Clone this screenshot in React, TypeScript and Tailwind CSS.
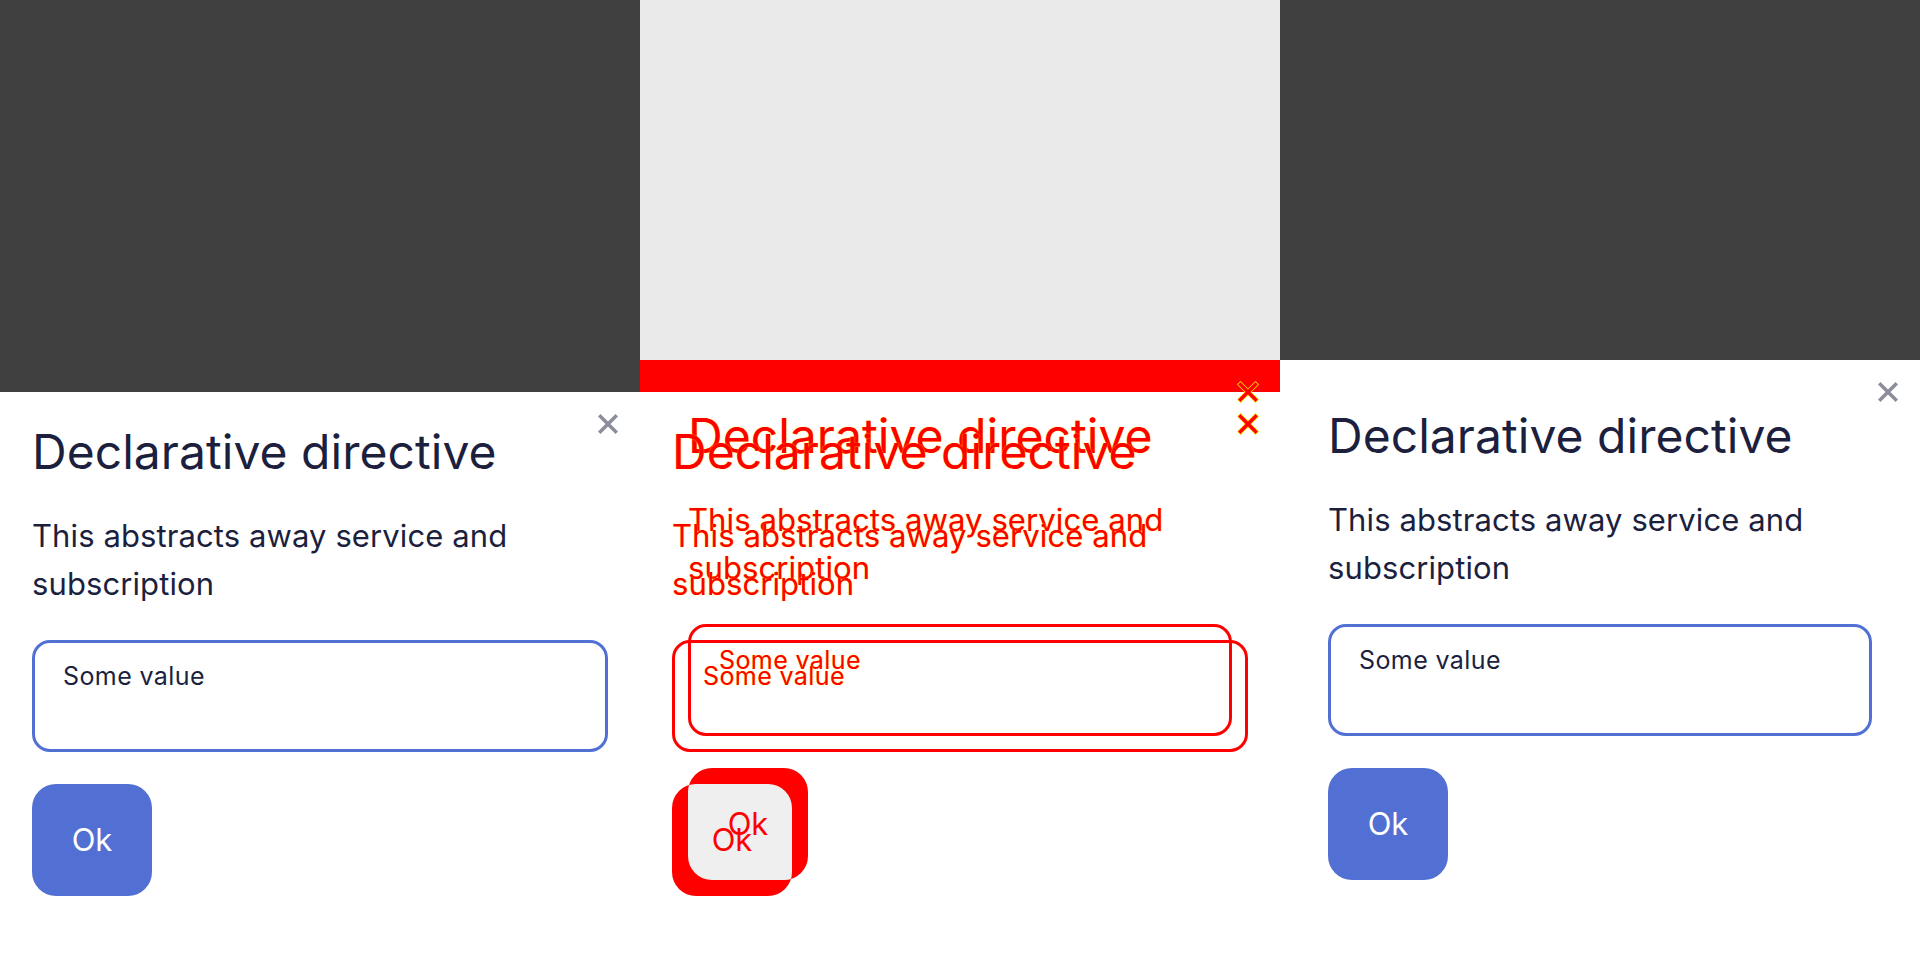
import React from "react";

type Mode = "plain" | "diffTop" | "diffBottom";

function CloseIcon({ color, halo }: { color: string; halo?: boolean }) {
  return (
    <svg width="22" height="22" viewBox="0 0 22 22" fill="none">
      {halo && (
        <path d="M3.5 3.5L18.5 18.5M18.5 3.5L3.5 18.5" stroke="#ffee00" strokeWidth="5" strokeLinecap="square" />
      )}
      <path d="M3.5 3.5L18.5 18.5M18.5 3.5L3.5 18.5" stroke={color} strokeWidth="3.5" strokeLinecap="square" />
    </svg>
  );
}

function Dialog({ wide, mode }: { wide?: boolean; mode: Mode }) {
  const diff = mode !== "plain";
  const ink = diff ? "text-[#ff0000] [text-shadow:0_0_1px_#ffee00]" : "text-[#1c1f3e]";
  const line = diff ? "border-[#ff0000]" : "border-[#5270d4]";

  return (
    <div
      className={
        "relative font-['Inter',sans-serif] " +
        (wide ? "px-12 pt-12 pb-20 " : "px-8 pt-8 pb-16 ") +
        (diff ? "bg-transparent" : "bg-white")
      }
    >
      <div className="absolute top-[21px] right-[21px]">
        <CloseIcon color={diff ? "#ff0000" : "#8b8d9b"} halo={diff} />
      </div>

      <h2 className={"text-[48px] leading-[56px] font-normal tracking-[0.05px] " + ink}>
        Declarative directive
      </h2>
      <p className={"mt-8 text-[31px] leading-[48px] tracking-[0.1px] " + ink}>
        This abstracts away service and subscription
      </p>

      <div
        className={
          "mt-8 h-[112px] rounded-[18px] border-[3px] px-[28px] pt-[15px] text-[25px] leading-[36px] tracking-[0.4px] " +
          line +
          " " +
          ink
        }
      >
        Some value
      </div>

      <div className="mt-8 flex">
        {mode === "plain" && (
          <button className="flex h-[112px] w-[120px] items-center justify-center rounded-3xl bg-[#5270d4] text-[31px] text-white">
            Ok
          </button>
        )}
        {mode === "diffBottom" && (
          <div className="flex h-[112px] w-[120px] items-center justify-center rounded-3xl bg-[#ff0000]" />
        )}
        {mode === "diffTop" && (
          <div className="relative h-[112px] w-[120px] overflow-hidden rounded-3xl bg-[#ff0000]">
            <div className="absolute top-[-16px] left-[16px] flex h-[112px] w-[120px] items-center justify-center rounded-3xl bg-[#efefef] text-[31px] text-[#ff0000]">
              Ok
            </div>
            <div className="relative flex h-full w-full items-center justify-center text-[31px] text-[#ff0000]">
              Ok
            </div>
          </div>
        )}
      </div>
    </div>
  );
}

export default function App() {
  return (
    <div className="flex h-[960px] w-[1920px] overflow-hidden bg-white">
      <div className="flex h-[960px] w-[640px] flex-col justify-end bg-[#404040]">
        <Dialog mode="plain" />
      </div>

      <div className="relative h-[960px] w-[640px] bg-white">
        <div className="h-[360px] bg-[#eaeaea]" />
        <div className="h-8 bg-[#ff0000]" />
        <div className="absolute inset-0 flex flex-col justify-end">
          <Dialog wide mode="diffBottom" />
        </div>
        <div className="absolute inset-0 flex flex-col justify-end">
          <Dialog mode="diffTop" />
        </div>
      </div>

      <div className="flex h-[960px] w-[640px] flex-col justify-end bg-[#404040]">
        <Dialog wide mode="plain" />
      </div>
    </div>
  );
}
